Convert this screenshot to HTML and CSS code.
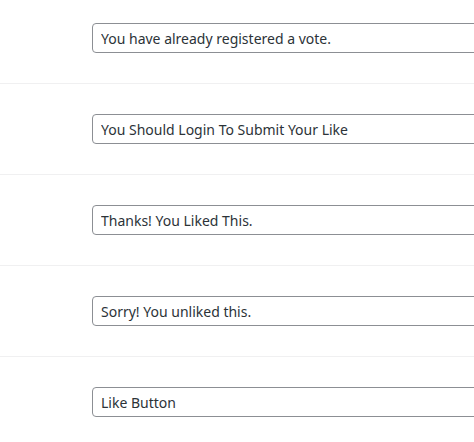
FILE: index.html
```html
<!DOCTYPE html>
<html>
<head>
<link rel="stylesheet" href="styles.css">
</head>
<body>

<div class="form-table">
	<div class="row">
		<div class="label"></div>
		<div class="field"><input type="text" class="regular-text" value="You have already registered a vote."></div>
	</div>
	<div class="row">
		<div class="label"></div>
		<div class="field"><input type="text" class="regular-text" value="You Should Login To Submit Your Like"></div>
	</div>
	<div class="row">
		<div class="label"></div>
		<div class="field"><input type="text" class="regular-text" value="Thanks! You Liked This."></div>
	</div>
	<div class="row">
		<div class="label"></div>
		<div class="field"><input type="text" class="regular-text" value="Sorry! You unliked this."></div>
	</div>
	<div class="row">
		<div class="label"></div>
		<div class="field"><input type="text" class="regular-text" value="Like Button"></div>
	</div>
</div>

</body>
</html>
```

FILE: styles.css
```css
html, body {
  margin: 0;
  padding: 0;
  background: #fff;
  overflow: hidden;
}

.form-table {
  margin-top: -7px;
}

.row {
  display: flex;
  border-bottom: 1px solid #f0f0f1;
  padding: 30px 0;
}

.label {
  width: 92px;
  flex: none;
}

.field {
  flex: none;
}

.regular-text {
  box-sizing: border-box;
  width: 420px;
  height: 30px;
  margin: 0;
  padding: 0 8px;
  border: 1px solid #8c8f94;
  border-radius: 4px;
  background: #fff;
  color: #2c3338;
  font-family: "Noto Sans", sans-serif;
  font-size: 14px;
  line-height: 2;
  outline: none;
}
```
